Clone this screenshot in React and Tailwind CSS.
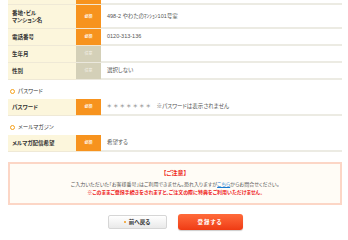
const FONT = "font-['Liberation_Sans','Noto_Sans_CJK_JP',sans-serif] [font-feature-settings:'palt']";

function Badge({ required }) {
  return required ? (
    <div className="flex w-[25px] shrink-0 items-center justify-center border-b border-[#f3e6d0] bg-[#f7931e] text-[4px] font-bold text-white">
      必須
    </div>
  ) : (
    <div className="flex w-[25px] shrink-0 items-center justify-center border-b border-[#ebe8dd] bg-[#d4d0b8] text-[4px] text-[#f4f2ea]">
      任意
    </div>
  );
}

function Row({ label, required = true, h = "h-[17px]", children }) {
  return (
    <div className={`flex ${h}`}>
      <div className="flex w-[68px] shrink-0 items-center border-b border-[#efe9d6] bg-[#fcf6dc] pl-[4px] text-[5.5px] font-bold leading-[7px] text-[#333]">
        {label}
      </div>
      <Badge required={required} />
      <div className="flex flex-1 items-center border-b-2 border-[#ecebe3] pl-[6px] text-[5.5px] text-[#555]">
        {children}
      </div>
    </div>
  );
}

function Heading({ children }) {
  return (
    <div className="flex items-center gap-[3px] pb-[4px] pl-[2px] pt-[7px] text-[5.5px] leading-[8px] text-[#333]">
      <span className="h-[5px] w-[5px] rounded-full border-[1.5px] border-[#f5a01a]" />
      {children}
    </div>
  );
}

export default function App() {
  return (
    <div className={`h-[240px] w-[348px] overflow-hidden bg-white px-[8px] pr-[6px] ${FONT}`}>
      {/* tail of the previous row */}
      <div className="flex h-[5px]">
        <div className="w-[68px] border-b border-[#efe9d6] bg-[#fcf6dc]" />
        <div className="w-[25px] border-b border-[#f3e6d0] bg-[#f7931e]" />
        <div className="flex-1 border-b-2 border-[#ecebe3]" />
      </div>
      <Row label={<span>番地・ビル<br />マンション名</span>} h="h-[24px]">
        498-2 やわたのﾏﾝｼｮﾝ101号室
      </Row>
      <Row label="電話番号">0120-313-136</Row>
      <Row label="生年月" required={false} />
      <Row label="性別" required={false}>選択しない</Row>

      <Heading>パスワード</Heading>
      <Row label="パスワード">
        <span className="tracking-[2px] text-[#888]">＊＊＊＊＊＊＊</span>
        <span className="ml-[4px]">※パスワードは表示されません</span>
      </Row>

      <Heading>メールマガジン</Heading>
      <Row label="メルマガ配信希望">希望する</Row>

      <div className="mt-[10px] h-[43px] border-2 border-[#fcd6c6] bg-[#fffcf6] pt-[5px] text-center leading-[8px]">
        <p className="text-[6px] font-bold text-[#ee2a1a]">【ご注意】</p>
        <p className="mt-[3px] text-[5px] text-[#555]">
          ご入力いただいた「お客様番号」はご利用できません。恐れ入りますが
          <span className="text-[#1a7bd0] underline">こちら</span>
          からお問合せください。
        </p>
        <p className="text-[5px] font-bold text-[#ee1a1a]">
          ※このままご登録手続きをされますと、ご注文の際に特典をご利用いただけません。
        </p>
      </div>

      <div className="mt-[9px] flex items-center justify-center gap-[11px]">
        <button className="flex h-[14px] w-[59px] items-center justify-center gap-[3px] rounded-[2px] border border-[#d6d6d6] bg-gradient-to-b from-white to-[#e9e9e9] text-[5.5px] font-bold text-[#333]">
          <span className="h-[2px] w-[2px] rounded-full bg-[#f39a1a]" />
          前へ戻る
        </button>
        <button className="flex h-[16px] w-[65px] items-center justify-center rounded-[3px] bg-gradient-to-b from-[#ff6a3a] to-[#ef3a12] text-[5.5px] font-bold tracking-[1px] text-white shadow-[0_1px_1px_rgba(0,0,0,0.2)]">
          登録する
        </button>
      </div>
    </div>
  );
}
